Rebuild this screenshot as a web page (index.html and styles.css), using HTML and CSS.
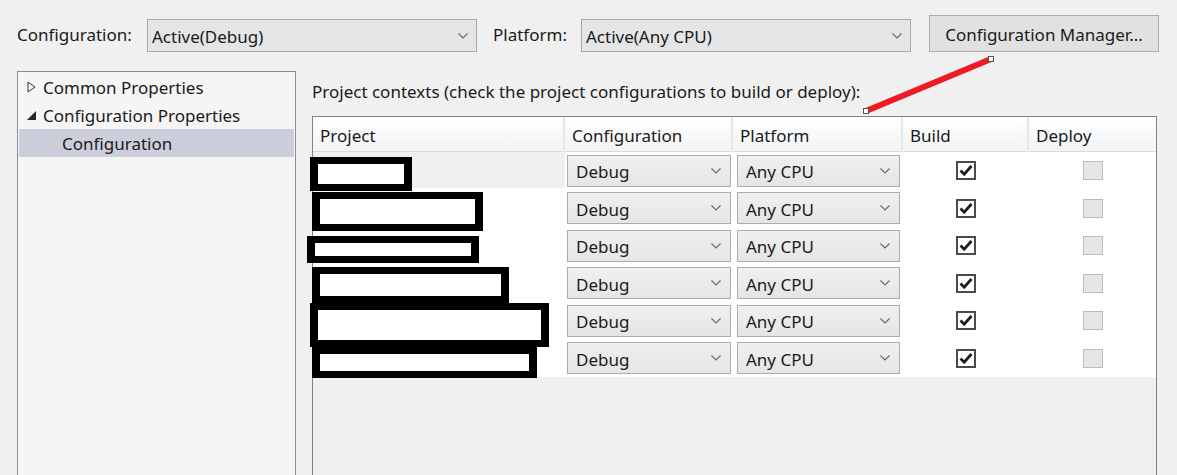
FILE: index.html
```html
<!DOCTYPE html>
<html lang="en">
<head>
    <meta charset="UTF-8">
    <title>Configuration</title>
    <link rel="stylesheet" href="styles.css">
</head>
<body>
    <div class="toolbar">
        <span class="field-label config-label">Configuration:</span>
        <div class="combo combo-top">
            <span>Active(Debug)</span>
            <svg class="chev" width="10" height="6" viewBox="0 0 10 6"><polyline points="0.5,0.5 5,5 9.5,0.5" /></svg>
        </div>
        <span class="field-label platform-label">Platform:</span>
        <div class="combo combo-top">
            <span>Active(Any CPU)</span>
            <svg class="chev" width="10" height="6" viewBox="0 0 10 6"><polyline points="0.5,0.5 5,5 9.5,0.5" /></svg>
        </div>
        <button class="manager">Configuration Manager...</button>
    </div>

    <div class="main">
        <div class="tree">
            <div class="tree-item">
                <svg class="twisty" width="9" height="12" viewBox="0 0 9 12"><polygon points="1,1 8,6 1,11" class="open-arrow" /></svg>
                Common Properties
            </div>
            <div class="tree-item">
                <svg class="twisty" width="9" height="12" viewBox="0 0 9 12"><polygon points="9,2 9,11 0,11" class="filled-arrow" /></svg>
                Configuration Properties
            </div>
            <div class="tree-item child selected">Configuration</div>
        </div>

        <div class="contexts">
            <div class="caption">Project contexts (check the project configurations to build or deploy):</div>
            <div class="grid">
                <div class="grid-head">
                    <div class="head-cell">Project</div>
                    <div class="head-cell">Configuration</div>
                    <div class="head-cell">Platform</div>
                    <div class="head-cell">Build</div>
                    <div class="head-cell">Deploy</div>
                </div>
                <div class="grid-body" id="gridBody"></div>
            </div>
        </div>
    </div>

    <svg class="annotation" width="1177" height="475" viewBox="0 0 1177 475">
        <line x1="866" y1="111" x2="991" y2="59" class="red-line" />
        <rect x="863.5" y="108.5" width="5" height="5" class="handle" />
        <rect x="988.5" y="56.5" width="5" height="5" class="handle" />
    </svg>

    <script>
        const chev = '<svg class="chev" width="10" height="6" viewBox="0 0 10 6"><polyline points="0.5,0.5 5,5 9.5,0.5" /></svg>';
        const tick = '<svg width="16" height="15" viewBox="0 0 16 15"><path d="M2.5 7.5 L6.2 11.2 L13.5 3" /></svg>';

        // black/white redaction marks over the project names: left, top, width, height (outer box)
        const redactions = [
            [310, 157, 102, 34],
            [312, 192, 171, 39],
            [307, 236, 172, 27],
            [312, 267, 197, 36],
            [310, 303, 239, 44],
            [312, 347, 225, 31]
        ];

        const body = document.getElementById('gridBody');
        for (let i = 0; i < 6; i++) {
            const row = document.createElement('div');
            row.className = 'grid-row';
            row.innerHTML =
                '<div class="cell project' + (i === 0 ? ' current' : '') + '"></div>' +
                '<div class="cell config"><div class="combo combo-row"><span>Debug</span>' + chev + '</div></div>' +
                '<div class="cell platform"><div class="combo combo-row"><span>Any CPU</span>' + chev + '</div></div>' +
                '<div class="cell center"><span class="check checked">' + tick + '</span></div>' +
                '<div class="cell center"><span class="check disabled"></span></div>';
            body.appendChild(row);
        }

        for (let r of redactions) {
            const mark = document.createElement('div');
            mark.className = 'redact';
            mark.style.left = (r[0] - 313) + 'px';
            mark.style.top = (r[1] - 152) + 'px';
            mark.style.width = r[2] + 'px';
            mark.style.height = r[3] + 'px';
            body.appendChild(mark);
        }
    </script>
</body>
</html>
```

FILE: styles.css
```css
html, body {
    margin: 0;
    height: 100%;
}
body {
    background: #f0f0f0;
    color: #1a1a1a;
    font-family: "Noto Sans", "Open Sans", sans-serif;
    font-size: 17px;
    display: flex;
    flex-direction: column;
    overflow: hidden;
    position: relative;
}
.toolbar {
    display: flex;
    align-items: flex-end;
    padding: 15px 0 0 17px;
    height: 37px;
}
.field-label {
    line-height: 35px;
}
.config-label {
    width: 130px;
}
.platform-label {
    width: 88px;
    margin-left: 16px;
}
.combo {
    box-sizing: border-box;
    display: flex;
    align-items: center;
    justify-content: space-between;
}
.combo span {
    padding-top: 2px;
}
.combo-top {
    width: 330px;
    height: 33px;
    padding: 0 8px 0 4px;
    border: 1px solid #a3aab0;
    background: #e4e5e6;
}
.chev polyline {
    fill: none;
    stroke: #666;
    stroke-width: 1.1;
}
.manager {
    box-sizing: border-box;
    width: 230px;
    height: 37px;
    margin-left: 18px;
    border: 1px solid #adadad;
    background: #e1e1e1;
    color: #1a1a1a;
    font-family: inherit;
    font-size: 17px;
    padding: 1px 0 0 0;
}
.main {
    flex: 1;
    display: flex;
    gap: 16px;
    margin-top: 19px;
    padding: 0 20px 0 17px;
}
.tree {
    box-sizing: border-box;
    width: 279px;
    border: 1px solid #8a8f96;
    border-bottom: none;
    background: #f5f5f5;
    padding: 1px 1px 0 1px;
}
.tree-item {
    height: 28px;
    display: flex;
    align-items: center;
    padding-left: 8px;
}
.twisty {
    margin-right: 7px;
}
.open-arrow {
    fill: none;
    stroke: #333;
    stroke-width: 1;
}
.filled-arrow {
    fill: #262626;
}
.tree-item.child {
    padding-left: 43px;
}
.selected {
    background: #cccedb;
}
.contexts {
    flex: 1;
    display: flex;
    flex-direction: column;
}
.caption {
    line-height: 24px;
    margin-top: 9px;
}
.grid {
    flex: 1;
    margin-top: 12px;
    border: 1px solid #828282;
    border-bottom: none;
    background: #f0f0f0;
}
.grid-head, .grid-row {
    display: grid;
    grid-template-columns: 252px 168px 170px 126px 1fr;
}
.grid-head {
    height: 34px;
    border-bottom: 1px solid #dadada;
    background: linear-gradient(#ffffff, #f2f3f5);
}
.head-cell {
    box-sizing: border-box;
    padding: 2px 0 0 7px;
    line-height: 34px;
    border-right: 2px solid #e6e7e9;
}
.head-cell:last-child {
    border-right: none;
}
.grid-body {
    position: relative;
}
.grid-row {
    height: 37.5px;
    background: #fff;
}
.cell {
    display: flex;
    align-items: center;
}
.cell.current {
    background: #f0f0f0;
    margin-bottom: 2px;
}
.cell.config {
    padding-left: 2px;
}
.cell.platform {
    padding-left: 4px;
}
.cell.center {
    justify-content: center;
}
.combo-row {
    width: 164px;
    height: 32px;
    padding: 0 9px 0 8px;
    border: 1px solid #acacac;
    background: linear-gradient(#f0f0f0, #e5e5e5);
}
.platform .combo-row {
    width: 163px;
}
.check {
    box-sizing: border-box;
    width: 20px;
    height: 19px;
    display: flex;
    align-items: center;
    justify-content: center;
}
.check.checked {
    border: 2px solid #4a4a4a;
    background: #fff;
}
.check.checked path {
    fill: none;
    stroke: #1e1e1e;
    stroke-width: 2.8;
}
.check.disabled {
    border: 1px solid #bcbcbc;
    background: #e6e6e6;
}
.redact {
    position: absolute;
    box-sizing: border-box;
    border: 7px solid #000;
    border-left-width: 8px;
    border-right-width: 8px;
    background: #fff;
}
.annotation {
    position: absolute;
    left: 0;
    top: 0;
    pointer-events: none;
}
.red-line {
    stroke: #ed1c24;
    stroke-width: 6;
}
.handle {
    fill: #fff;
    stroke: #555;
    stroke-width: 1;
}
```
